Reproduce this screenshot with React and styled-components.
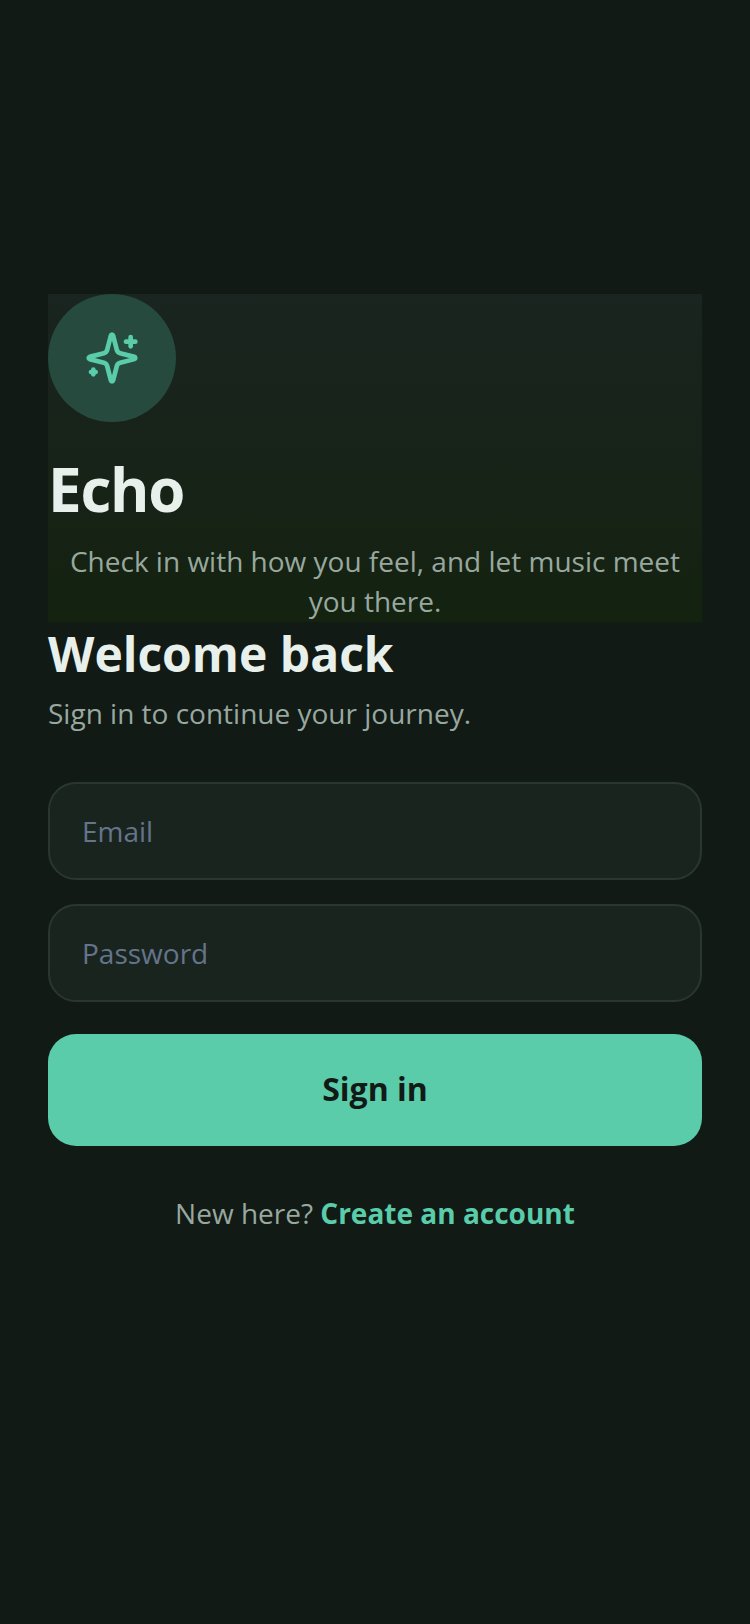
import React from "react";
import styled, { createGlobalStyle } from "styled-components";

const Global = createGlobalStyle`
  * { box-sizing: border-box; }
  html, body { margin: 0; padding: 0; background: #111a15; }
  body { font-family: "Open Sans", "Noto Sans", sans-serif; }
`;

const Page = styled.main`
  min-height: 1624px;
  padding: 294px 48px 0;
  background: #111a15;
  display: flex;
  flex-direction: column;
`;

const Hero = styled.section`
  height: 328px;
  background: linear-gradient(180deg, #1a2420 0%, #142210 100%);
  display: flex;
  flex-direction: column;
`;

const LogoCircle = styled.div`
  width: 128px;
  height: 128px;
  border-radius: 50%;
  background: #264a3d;
  color: #5accaa;
  display: flex;
  align-items: center;
  justify-content: center;
`;

const Brand = styled.h1`
  margin: 26px 0 0;
  font-size: 60px;
  line-height: 82px;
  font-weight: 700;
  letter-spacing: -1.2px;
  color: #e8f0ec;
`;

const Tagline = styled.p`
  margin: 11px 0 0;
  font-size: 28px;
  line-height: 40px;
  text-align: center;
  color: #98a89f;
`;

const Title = styled.h2`
  margin: 0;
  font-size: 48px;
  line-height: 64px;
  font-weight: 700;
  color: #e8f0ec;
`;

const Subtitle = styled.p`
  margin: 7px 0 0;
  font-size: 28px;
  line-height: 40px;
  color: #98a89f;
`;

const Form = styled.form`
  margin-top: 49px;
  display: flex;
  flex-direction: column;
  gap: 24px;
`;

const Field = styled.input`
  height: 98px;
  width: 100%;
  padding: 0 32px;
  border: 2px solid #2a3631;
  border-radius: 28px;
  background: #1a241f;
  font: 400 28px "Open Sans", sans-serif;
  color: #e8f0ec;
  outline: none;
  &::placeholder { color: #64748b; opacity: 1; }
`;

const Submit = styled.button`
  margin-top: 8px;
  height: 112px;
  padding: 0 0 4px;
  border: 0;
  border-radius: 28px;
  background: #5accaa;
  color: #111a15;
  font: 700 32px "Open Sans", sans-serif;
`;

const Footer = styled.p`
  margin: 47px 0 0;
  font-size: 28px;
  line-height: 40px;
  text-align: center;
  color: #98a89f;
`;

const FooterLink = styled.a`
  font-weight: 700;
  color: #5accaa;
`;

const SparklesIcon = () => (
  <svg width="56" height="56" viewBox="0 0 24 24" fill="none" stroke="currentColor" strokeWidth="2" strokeLinecap="round" strokeLinejoin="round">
    <path d="M9.937 15.5A2 2 0 0 0 8.5 14.063l-6.135-1.582a.5.5 0 0 1 0-.962L8.5 9.936A2 2 0 0 0 9.937 8.5l1.582-6.135a.5.5 0 0 1 .963 0L14.063 8.5A2 2 0 0 0 15.5 9.937l6.135 1.581a.5.5 0 0 1 0 .964L15.5 14.063a2 2 0 0 0-1.437 1.437l-1.582 6.135a.5.5 0 0 1-.963 0z" />
    <path d="M20 3v4" />
    <path d="M22 5h-4" />
    <path d="M4 17v2" />
    <path d="M5 18H3" />
  </svg>
);

export default function App() {
  return (
    <>
      <Global />
      <Page>
        <Hero>
          <LogoCircle>
            <SparklesIcon />
          </LogoCircle>
          <Brand>Echo</Brand>
          <Tagline>Check in with how you feel, and let music meet you there.</Tagline>
        </Hero>
        <Title>Welcome back</Title>
        <Subtitle>Sign in to continue your journey.</Subtitle>
        <Form onSubmit={(e) => e.preventDefault()}>
          <Field type="email" placeholder="Email" />
          <Field type="password" placeholder="Password" />
          <Submit type="submit">Sign in</Submit>
        </Form>
        <Footer>
          New here? <FooterLink>Create an account</FooterLink>
        </Footer>
      </Page>
    </>
  );
}
